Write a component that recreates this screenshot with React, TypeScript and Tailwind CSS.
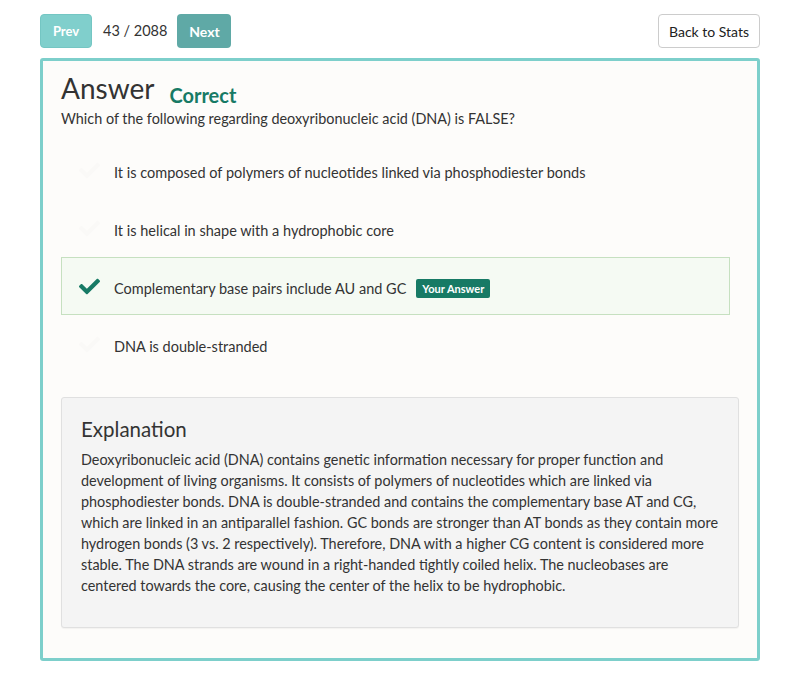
import { FaCheck } from "react-icons/fa";

const OPTIONS = [
  { text: "It is composed of polymers of nucleotides linked via phosphodiester bonds", picked: false },
  { text: "It is helical in shape with a hydrophobic core", picked: false },
  { text: "Complementary base pairs include AU and GC", picked: true },
  { text: "DNA is double-stranded", picked: false },
];

const EXPLANATION =
  "Deoxyribonucleic acid (DNA) contains genetic information necessary for proper function and development of living organisms. It consists of polymers of nucleotides which are linked via phosphodiester bonds. DNA is double-stranded and contains the complementary base AT and CG, which are linked in an antiparallel fashion. GC bonds are stronger than AT bonds as they contain more hydrogen bonds (3 vs. 2 respectively). Therefore, DNA with a higher CG content is considered more stable. The DNA strands are wound in a right-handed tightly coiled helix. The nucleobases are centered towards the core, causing the center of the helix to be hydrophobic.";

export default function App() {
  return (
    <div className="min-h-[685px] bg-white px-[40px] pt-[14px] text-[#333] font-['Lato','Open_Sans',sans-serif]">
      <div className="w-[720px]">
        <div className="flex items-center">
          <button className="h-[34px] w-[52px] rounded-[4px] border border-[#74c6c3] bg-[#80cfcc] text-[13px] font-bold leading-[32px] text-white">Prev</button>
          <span className="ml-[11px] text-[14.5px] text-[#333]">43 / 2088</span>
          <button className="ml-[10px] h-[34px] w-[54px] rounded-[4px] bg-[#5fa9a6] text-[14px] font-bold text-white">Next</button>
          <button className="ml-auto h-[34px] w-[102px] rounded-[4px] border border-[#cccccc] bg-white text-[14px] text-[#222]">Back to Stats</button>
        </div>

        <div className="mt-[10px] rounded-[3px] border-[3px] border-[#7dcfcb] bg-[#fdfcfa] px-[18px] pb-[30px] pt-[8px]">
          <div className="flex items-end">
            <h1 className="text-[28px] leading-[38px] text-[#333]">Answer</h1>
            <span className="ml-[15px] mb-[-3px] text-[20px] font-bold leading-[30px] text-[#177a65]">Correct</span>
          </div>
          <p className="mt-[2px] text-[14.4px] leading-[20px] text-[#333]">Which of the following regarding deoxyribonucleic acid (DNA) is FALSE?</p>

          <div className="mr-[9px] mt-[12px] flex flex-col">
            {OPTIONS.map((o) => (
              <div
                key={o.text}
                className={`flex h-[58px] items-center pl-[17px] ${o.picked ? "border border-[#c6e0c0] bg-[#f5faf3]" : "border border-transparent"}`}
              >
                <span className="flex w-[35px] items-center">
                  <FaCheck size={21} className={o.picked ? "text-[#177a65]" : "text-[#faf9f7]"} />
                </span>
                <span className="pt-[5px] text-[14.5px] leading-[20px] text-[#333]">{o.text}</span>
                {o.picked && (
                  <span className="ml-[10px] mt-[5px] rounded-[2px] bg-[#177a65] px-[6px] py-[2px] text-[11px] font-bold leading-[15px] text-white">Your Answer</span>
                )}
              </div>
            ))}
          </div>

          <div className="mt-[24px] h-[231px] rounded-[3px] border border-[#e0e0e0] bg-[#f4f4f4] px-[19px] pt-[16px] shadow-[0_1px_1px_rgba(0,0,0,0.04)]">
            <h2 className="text-[20.5px] leading-[30px] text-[#333]">Explanation</h2>
            <p className="mt-[5px] text-[14.4px] leading-[21px] text-[#333]">{EXPLANATION}</p>
          </div>
        </div>
      </div>
    </div>
  );
}
